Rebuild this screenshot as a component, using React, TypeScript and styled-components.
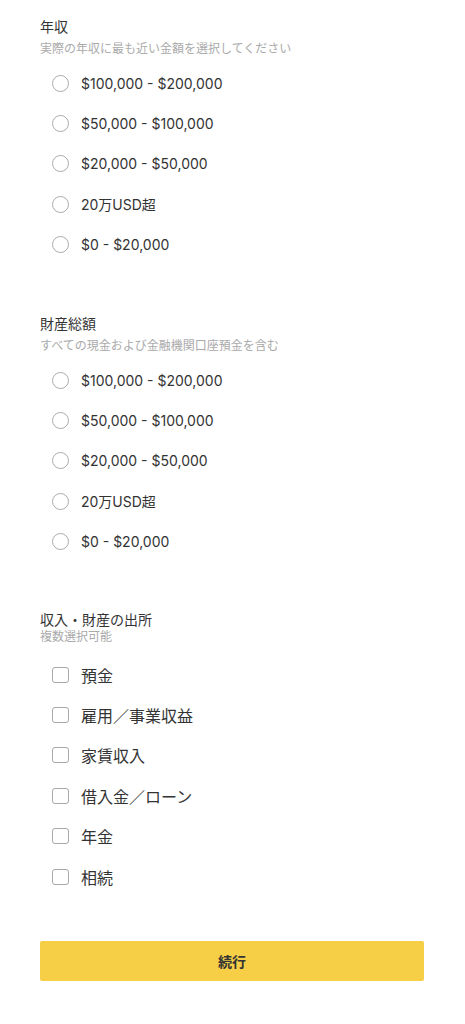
import styled, { createGlobalStyle } from "styled-components";

const GlobalStyle = createGlobalStyle`
  body {
    margin: 0;
    background: #fff;
    font-family: Inter, "Noto Sans CJK JP", sans-serif;
    color: #333;
  }
`;

const Page = styled.div`
  padding: 17px 41px 40px 40px;
`;

const Section = styled.section<{ $gap: number }>`
  margin-bottom: ${(p) => p.$gap}px;
`;

const Title = styled.div`
  font-size: 14px;
  line-height: 20px;
  color: #333;
`;

const Hint = styled.div<{ $tight?: boolean }>`
  font-size: 12px;
  line-height: 17px;
  color: #aaa;
  margin-top: ${(p) => (p.$tight ? -1.5 : 3)}px;
`;

const List = styled.ul<{ $top: number }>`
  list-style: none;
  margin: ${(p) => p.$top}px 0 0;
  padding: 0;
`;

const Option = styled.li<{ $big?: boolean }>`
  display: flex;
  align-items: center;
  gap: 12px;
  height: 40.4px;
  padding-left: 12px;
  font-size: ${(p) => (p.$big ? 16 : 14)}px;
  color: #333;
  cursor: pointer;
`;

const Radio = styled.span`
  width: 17px;
  height: 17px;
  box-sizing: border-box;
  border: 1.3px solid #aaa;
  border-radius: 50%;
  flex-shrink: 0;
`;

const Check = styled.span`
  width: 17px;
  height: 16px;
  box-sizing: border-box;
  border: 1.5px solid #a8a8a8;
  border-radius: 3px;
  flex-shrink: 0;
`;

const Button = styled.button`
  display: block;
  width: 100%;
  height: 40px;
  border: none;
  border-radius: 2px;
  background: #f7cf47;
  color: #333;
  font-family: inherit;
  font-size: 14px;
  font-weight: 700;
  cursor: pointer;
`;

const amounts = [
  "$100,000 - $200,000",
  "$50,000 - $100,000",
  "$20,000 - $50,000",
  "20万USD超",
  "$0 - $20,000",
];

const sources = ["預金", "雇用／事業収益", "家賃収入", "借入金／ローン", "年金", "相続"];

const App = () => {
  return (
    <Page>
      <GlobalStyle />
      <Section $gap={49}>
        <Title>年収</Title>
        <Hint>実際の年収に最も近い金額を選択してください</Hint>
        <List $top={6}>
          {amounts.map((a) => (
            <Option key={a}>
              <Radio />
              {a}
            </Option>
          ))}
        </List>
      </Section>

      <Section $gap={48}>
        <Title>財産総額</Title>
        <Hint>すべての現金および金融機関口座預金を含む</Hint>
        <List $top={6}>
          {amounts.map((a) => (
            <Option key={a}>
              <Radio />
              {a}
            </Option>
          ))}
        </List>
      </Section>

      <Section $gap={44}>
        <Title>収入・財産の出所</Title>
        <Hint $tight>複数選択可能</Hint>
        <List $top={9}>
          {sources.map((s) => (
            <Option key={s} $big>
              <Check />
              {s}
            </Option>
          ))}
        </List>
      </Section>

      <Button>続行</Button>
    </Page>
  );
};

export default App;
